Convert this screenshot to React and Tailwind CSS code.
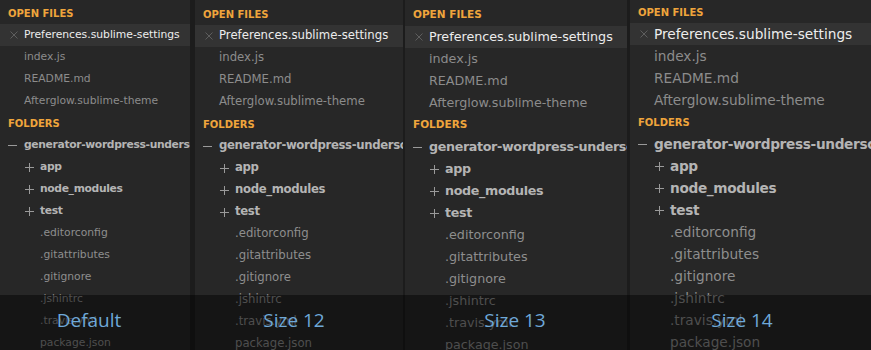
import React from 'react';

const panels = [
  { label: 'Default', w: 'w-[190px]', edge: '', size: 'text-[10.75px]', head: 'text-[10px]', top: 'h-[24px]', shift: 'pr-[12px]' },
  { label: 'Size 12', w: 'w-[213px]', edge: 'border-l-[5px] border-[#1c1c1c]', size: 'text-[11.7px]', head: 'text-[10px]', top: 'h-[25px]', shift: 'pr-[5px]' },
  { label: 'Size 13', w: 'w-[224px]', edge: 'border-l-2 border-[#1c1c1c]', size: 'text-[12.7px]', head: 'text-[10.5px]', top: 'h-[26px]', shift: '' },
  { label: 'Size 14', w: 'w-[244px]', edge: 'border-l-[3px] border-[#1c1c1c]', size: 'text-[13.7px]', head: 'text-[10px]', top: 'h-[23px]', shift: 'pr-[14px]' },
];

const openFiles = ['index.js', 'README.md', 'Afterglow.sublime-theme'];
const childFolders = ['app', 'node_modules', 'test'];
const childFiles = ['.editorconfig', '.gitattributes', '.gitignore', '.jshintrc', '.travis.yml', 'package.json'];

const CloseIcon = () => (
  <svg width="8" height="8" viewBox="0 0 8 8" className="ml-[2px]">
    <path d="M0.5 0.5 L7.5 7.5 M7.5 0.5 L0.5 7.5" stroke="#5e5e5e" strokeWidth="1" />
  </svg>
);

const MinusIcon = () => (
  <svg width="10" height="10" viewBox="0 0 10 10">
    <path d="M0 5.5 H9" stroke="#9a9a9a" strokeWidth="1" />
  </svg>
);

const PlusIcon = () => (
  <svg width="9" height="9" viewBox="0 0 9 9" className="ml-[1px]">
    <path d="M0 4.5 H9 M4.5 0 V9" stroke="#9a9a9a" strokeWidth="1" />
  </svg>
);

const Row = ({ children }) => (
  <div className="h-[22px] flex items-center pl-2 whitespace-nowrap">{children}</div>
);

const Sidebar = ({ p }) => (
  <div className={`${p.w} ${p.edge} shrink-0 h-[350px] overflow-hidden bg-[#272727] ${p.size}`}>
    <div className={`${p.top} flex items-end pb-[3px] pl-2 font-bold text-[#efa53c] ${p.head}`}>OPEN FILES</div>
    <div className="h-[22px] flex items-center pl-2 whitespace-nowrap bg-[#333333] text-[#ededed]">
      <span className="w-4 shrink-0 flex items-center"><CloseIcon /></span>
      Preferences.sublime-settings
    </div>
    {openFiles.map((f) => (
      <Row key={f}>
        <span className="w-4 shrink-0" />
        <span className="text-[#8c8c8c]">{f}</span>
      </Row>
    ))}
    <div className={`h-[22px] flex items-center pl-2 font-bold text-[#efa53c] ${p.head}`}>FOLDERS</div>
    <Row>
      <span className="w-4 shrink-0 flex items-center"><MinusIcon /></span>
      <span className="font-bold tracking-[-0.35px] text-[#b4b4b4]">generator-wordpress-underscores</span>
    </Row>
    {childFolders.map((f) => (
      <Row key={f}>
        <span className="w-4 shrink-0" />
        <span className="w-4 shrink-0 flex items-center"><PlusIcon /></span>
        <span className="font-bold tracking-[-0.35px] text-[#b4b4b4]">{f}</span>
      </Row>
    ))}
    {childFiles.map((f) => (
      <Row key={f}>
        <span className="w-8 shrink-0" />
        <span className="text-[#8e8e8e]">{f}</span>
      </Row>
    ))}
  </div>
);

export default function App() {
  return (
    <div className="relative w-[871px] h-[350px] overflow-hidden bg-[#1c1c1c] font-['DejaVu_Sans',sans-serif]">
      <div className="flex">
        {panels.map((p) => (
          <Sidebar key={p.label} p={p} />
        ))}
      </div>
      {/* caption strip over the bottom of all panels */}
      <div className="absolute left-0 right-0 bottom-0 h-[55px] bg-black/45 flex">
        {panels.map((p) => (
          <div key={p.label} className={`${p.w} shrink-0 flex justify-center pt-4 ${p.shift}`}>
            <span className="font-['Open_Sans',sans-serif] text-[19px] leading-[19px] text-[#6ea8d8]">{p.label}</span>
          </div>
        ))}
      </div>
    </div>
  );
}
